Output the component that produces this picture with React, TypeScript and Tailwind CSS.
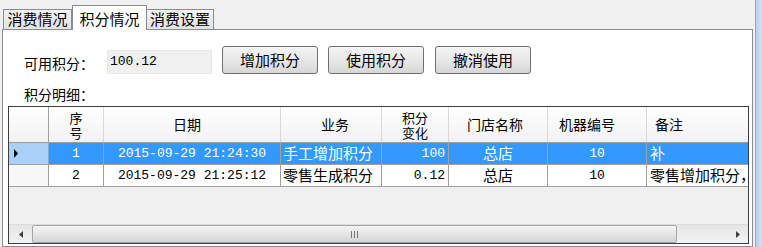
import React from "react";

const cjk = "font-['Noto_Sans_CJK_SC',sans-serif]";
const mono = "font-['Liberation_Mono','Noto_Sans_CJK_SC',monospace]";

const cols = [55, 177, 101, 67, 99, 99, 140];

function Btn({ label }: { label: string }) {
  return (
    <div
      className={`w-[96px] h-[28px] rounded-[3px] border border-[#707070] bg-gradient-to-b from-[#f4f4f4] via-[#e8e8e8] to-[#d6d6d6] flex items-center justify-center text-[15px] text-black ${cjk}`}
    >
      {label}
    </div>
  );
}

function TwoLine({ a, b }: { a: string; b: string }) {
  return (
    <div className="flex flex-col items-center">
      <div className="h-[15px] leading-[15px] text-[13px]">{a}</div>
      <div className="h-[15px] leading-[15px] text-[13px]">{b}</div>
    </div>
  );
}

export default function App() {
  const headerCell =
    "h-full border-r border-[#d8d8d8] flex items-center justify-center text-[14px] leading-[15px] text-black shrink-0";
  const cell = "h-full border-r border-[#a0a0a0] flex items-center shrink-0 overflow-hidden whitespace-nowrap";
  return (
    <div className="w-[762px] h-[247px] bg-[#f0f0f0] flex overflow-hidden">
      <div className="w-[755px] flex flex-col">
        {/* tabs */}
        <div className="h-[29px] flex items-end pl-[3px] shrink-0">
          <div
            className={`w-[69px] h-[20px] border border-b-0 border-[#898c95] bg-gradient-to-b from-[#f2f2f2] to-[#e3e3e3] flex items-center justify-center text-[15px] text-black ${cjk}`}
          >
            消费情况
          </div>
          <div
            className={`relative z-10 w-[75px] h-[25px] -mb-px border border-b-0 border-[#898c95] bg-white flex items-start pt-[2px] justify-center text-[15px] text-black ${cjk}`}
          >
            积分情况
          </div>
          <div
            className={`w-[67px] h-[20px] border border-b-0 border-l-0 border-[#898c95] bg-gradient-to-b from-[#f2f2f2] to-[#e3e3e3] flex items-center justify-center text-[15px] text-black ${cjk}`}
          >
            消费设置
          </div>
        </div>
        {/* panel */}
        <div className="ml-[2px] w-[751px] flex-1 border border-[#898c95] bg-white flex flex-col">
          <div className="mt-[16px] h-[28px] flex items-start shrink-0">
            <div className={`ml-[21px] w-[83px] mt-[9px] text-[14px] leading-[16px] text-black ${cjk}`}>
              可用积分：
            </div>
            <div
              className={`mt-[4px] w-[105px] h-[24px] bg-[#f0f0f0] border border-[#e8e8e8] flex items-center pl-[2px] text-[13px] text-black ${mono}`}
            >
              100.12
            </div>
            <div className="ml-[10px]">
              <Btn label="增加积分" />
            </div>
            <div className="ml-[10px]">
              <Btn label="使用积分" />
            </div>
            <div className="ml-[11px]">
              <Btn label="撤消使用" />
            </div>
          </div>
          <div className={`ml-[21px] mt-[12px] h-[17px] text-[14px] leading-[16px] text-black ${cjk}`}>
            积分明细：
          </div>
          {/* grid */}
          <div className="ml-[5px] mt-[3px] w-[741px] h-[138px] border border-[#3c3c3c] bg-[#f0f0f0] flex flex-col overflow-hidden">
            {/* header */}
            <div className={`h-[36px] flex border-b border-[#a0a0a0] bg-gradient-to-b from-white to-[#f2f2f2] shrink-0 ${cjk}`}>
              <div className="w-[40px] h-full border-r border-[#a0a0a0] shrink-0" />
              <div className={headerCell} style={{ width: cols[0] }}>
                <TwoLine a="序" b="号" />
              </div>
              <div className={`${headerCell} pr-[10px]`} style={{ width: cols[1] }}>日期</div>
              <div className={`${headerCell} pl-[8px]`} style={{ width: cols[2] }}>业务</div>
              <div className={headerCell} style={{ width: cols[3] }}>
                <TwoLine a="积分" b="变化" />
              </div>
              <div className={`${headerCell} pr-[6px]`} style={{ width: cols[4] }}>门店名称</div>
              <div className={`${headerCell} pr-[20px]`} style={{ width: cols[5] }}>机器编号</div>
              <div className={`${headerCell} !justify-start pl-[8px]`} style={{ width: cols[6] }}>备注</div>
            </div>
            {/* row 1 */}
            <div className="h-[22px] flex shrink-0 border-b border-[#a0a0a0]">
              <div className="w-[40px] h-full border-r border-[#7fa9d4] bg-[#a9d1f5] shrink-0 flex items-center pl-[4px]">
                <svg width="6" height="9" viewBox="0 0 6 9"><path d="M1 0 L5 4.5 L1 9 Z" fill="#000" /></svg>
              </div>
              <div className="flex bg-[#3399ff] text-white h-full">
                <div className={`${cell} justify-center text-[13px] ${mono}`} style={{ width: cols[0] }}>1</div>
                <div className={`${cell} justify-center text-[13px] ${mono}`} style={{ width: cols[1] }}>2015-09-29 21:24:30</div>
                <div className={`${cell} pl-[2px] text-[15px] ${cjk}`} style={{ width: cols[2] }}>手工增加积分</div>
                <div className={`${cell} justify-end pr-[3px] text-[13px] ${mono}`} style={{ width: cols[3] }}>100</div>
                <div className={`${cell} justify-center text-[15px] ${cjk}`} style={{ width: cols[4] }}>总店</div>
                <div className={`${cell} justify-center text-[13px] ${mono}`} style={{ width: cols[5] }}>10</div>
                <div className={`${cell} pl-[3px] text-[15px] ${cjk}`} style={{ width: cols[6] }}>补</div>
              </div>
            </div>
            {/* row 2 */}
            <div className="h-[22px] flex shrink-0">
              <div className="w-[40px] h-full border-r border-b border-[#a0a0a0] bg-[#f7f7f7] shrink-0" />
              <div className="flex bg-white text-black h-full border-b border-[#a0a0a0]">
                <div className={`${cell} justify-center text-[13px] ${mono}`} style={{ width: cols[0] }}>2</div>
                <div className={`${cell} justify-center text-[13px] ${mono}`} style={{ width: cols[1] }}>2015-09-29 21:25:12</div>
                <div className={`${cell} pl-[2px] text-[15px] ${cjk}`} style={{ width: cols[2] }}>零售生成积分</div>
                <div className={`${cell} justify-end pr-[3px] text-[13px] ${mono}`} style={{ width: cols[3] }}>0.12</div>
                <div className={`${cell} justify-center text-[15px] ${cjk}`} style={{ width: cols[4] }}>总店</div>
                <div className={`${cell} justify-center text-[13px] ${mono}`} style={{ width: cols[5] }}>10</div>
                <div className={`${cell} pl-[3px] text-[15px] ${cjk}`} style={{ width: cols[6] }}>零售增加积分，</div>
              </div>
            </div>
            <div className="flex-1" />
            {/* scrollbar */}
            <div className="h-[19px] flex shrink-0 border-t border-[#dcdcdc] bg-gradient-to-b from-[#e6e6e6] to-[#f2f2f2]">
              <div className="w-[23px] h-full flex items-center justify-center">
                <svg width="4" height="7" viewBox="0 0 4 7"><path d="M4 0 L0 3.5 L4 7 Z" fill="#404040" /></svg>
              </div>
              <div className="w-[645px] h-full rounded-[2px] border border-[#a5a5a5] bg-gradient-to-b from-[#f3f3f3] via-[#e6e6e6] to-[#d4d4d4] flex items-center justify-center">
                <div className="flex gap-[2px]">
                  <div className="w-px h-[7px] bg-[#777]" />
                  <div className="w-px h-[7px] bg-[#777]" />
                  <div className="w-px h-[7px] bg-[#777]" />
                </div>
              </div>
              <div className="flex-1 h-full flex items-center justify-end pr-[8px]">
                <svg width="4" height="7" viewBox="0 0 4 7"><path d="M0 0 L4 3.5 L0 7 Z" fill="#404040" /></svg>
              </div>
            </div>
          </div>
        </div>
      </div>
      <div className="w-[7px] h-full bg-gradient-to-r from-[#b9d1ea] to-[#d3e2f2] border-l border-[#8fa9c9]" />
    </div>
  );
}
